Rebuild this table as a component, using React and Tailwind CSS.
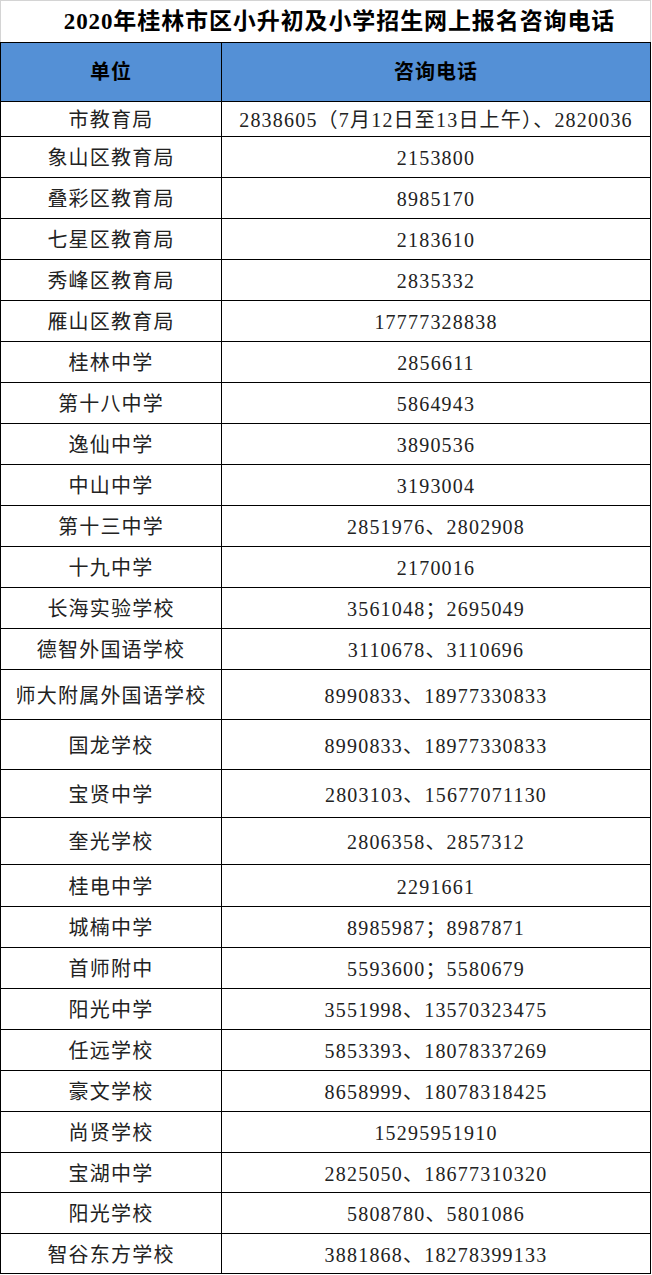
const ROWS = [
  ["市教育局", "2838605（7月12日至13日上午）、2820036", "h-[35px]"],
  ["象山区教育局", "2153800", "h-[41px]"],
  ["叠彩区教育局", "8985170", "h-[41px]"],
  ["七星区教育局", "2183610", "h-[41px]"],
  ["秀峰区教育局", "2835332", "h-[41px]"],
  ["雁山区教育局", "17777328838", "h-[41px]"],
  ["桂林中学", "2856611", "h-[41px]"],
  ["第十八中学", "5864943", "h-[41px]"],
  ["逸仙中学", "3890536", "h-[41px]"],
  ["中山中学", "3193004", "h-[41px]"],
  ["第十三中学", "2851976、2802908", "h-[41px]"],
  ["十九中学", "2170016", "h-[41px]"],
  ["长海实验学校", "3561048；2695049", "h-[41px]"],
  ["德智外国语学校", "3110678、3110696", "h-[41px]"],
  ["师大附属外国语学校", "8990833、18977330833", "h-[50px]"],
  ["国龙学校", "8990833、18977330833", "h-[50px]"],
  ["宝贤中学", "2803103、15677071130", "h-[48px]"],
  ["奎光学校", "2806358、2857312", "h-[47px]"],
  ["桂电中学", "2291661", "h-[42px]"],
  ["城楠中学", "8985987；8987871", "h-[41px]"],
  ["首师附中", "5593600；5580679", "h-[41px]"],
  ["阳光中学", "3551998、13570323475", "h-[41px]"],
  ["任远学校", "5853393、18078337269", "h-[41px]"],
  ["豪文学校", "8658999、18078318425", "h-[41px]"],
  ["尚贤学校", "15295951910", "h-[41px]"],
  ["宝湖中学", "2825050、18677310320", "h-[40px]"],
  ["阳光学校", "5808780、5801086", "h-[41px]"],
  ["智谷东方学校", "3881868、18278399133", "h-[40px]"],
];

const FONT = { fontFamily: '"Liberation Serif", "Noto Sans CJK SC", serif' };

export default function App() {
  return (
    <div className="w-[652px] bg-white text-[#222]" style={FONT}>
      <div className="w-[651px]">
        {/* title */}
        <div className="h-[42px] border-t border-r border-l border-[#d4d4d4] flex items-center justify-center">
          <h1 className="text-[23px] font-bold tracking-[0.9px] text-black leading-none pl-[28px]">
            2020年桂林市区小升初及小学招生网上报名咨询电话
          </h1>
        </div>

        {/* header */}
        <div className="grid grid-cols-[221px_1fr] h-[60px] border-t border-b border-l border-r border-black bg-[#5490d6] text-[20px] font-bold tracking-[1px] text-black">
          <div className="flex items-center justify-center border-r border-black">单位</div>
          <div className="flex items-center justify-center">咨询电话</div>
        </div>

        {/* rows */}
        {ROWS.map(([name, phone, h]) => (
          <div
            key={name}
            className={`grid grid-cols-[221px_1fr] border-b border-l border-r border-black text-[20px] tracking-[1.2px] ${h}`}
          >
            <div className="flex items-center justify-center border-r border-black pt-[2px]">{name}</div>
            <div className="flex items-center justify-center pt-[2px] whitespace-nowrap">{phone}</div>
          </div>
        ))}
      </div>
    </div>
  );
}
